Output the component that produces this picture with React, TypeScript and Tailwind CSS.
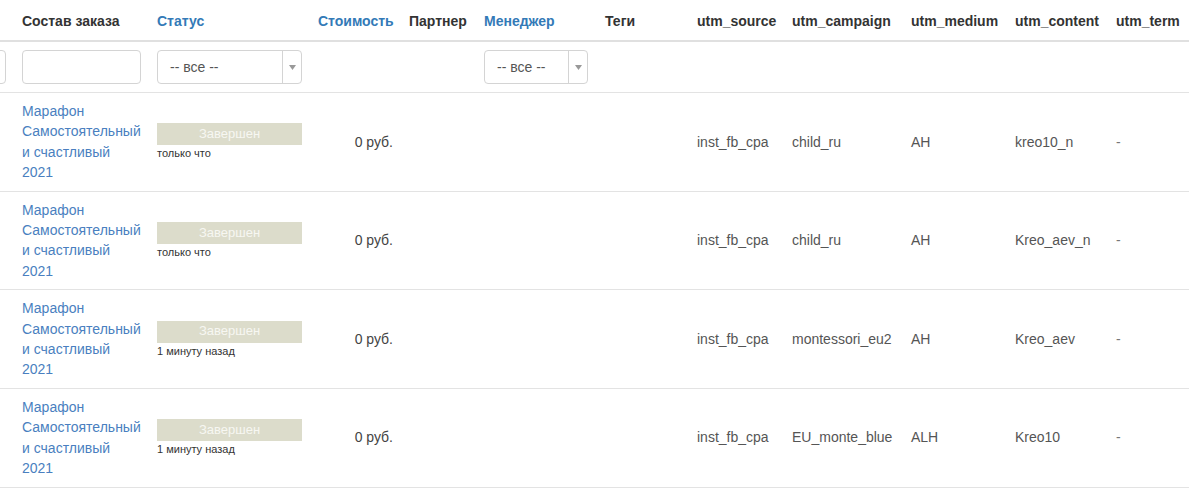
const rows = [
  { time: "только что", source: "inst_fb_cpa", campaign: "child_ru", medium: "AH", content: "kreo10_n" },
  { time: "только что", source: "inst_fb_cpa", campaign: "child_ru", medium: "AH", content: "Kreo_aev_n" },
  { time: "1 минуту назад", source: "inst_fb_cpa", campaign: "montessori_eu2", medium: "AH", content: "Kreo_aev" },
  { time: "1 минуту назад", source: "inst_fb_cpa", campaign: "EU_monte_blue", medium: "ALH", content: "Kreo10" },
  { time: "1 минуту назад", source: "inst_fb_cpa", campaign: "child_ru", medium: "AH", content: "kreo10_n" },
];

function SelectBox({ width }: { width: string }) {
  return (
    <div className={`flex h-[34px] ${width} items-stretch rounded-[4px] border border-[#d4d4d4] bg-white`}>
      <div className="flex flex-1 items-center pl-[12px] text-[14px] text-[#555]">-- все --</div>
      <div className="flex w-[19px] items-center justify-center border-l border-[#d4d4d4]">
        <svg width="7" height="5" viewBox="0 0 7 5">
          <path d="M0 0 L7 0 L3.5 5 Z" fill="#999" />
        </svg>
      </div>
    </div>
  );
}

export default function App() {
  const th = "px-[8px] pt-[11px] pb-[9px] text-left align-bottom text-[14px] leading-[20px] font-bold whitespace-nowrap";
  const td = "px-[8px] py-[8px] align-middle text-[14px] leading-[20.4px] border-t border-[#e3e3e3]";
  return (
    <div className="h-[500px] w-[1199px] overflow-hidden bg-white font-['Liberation_Sans',Arial,sans-serif] text-[#333]">
      <table className="ml-[-46px] table-fixed border-collapse" style={{ width: 1235 }}>
        <colgroup>
          <col className="w-[60px]" />
          <col className="w-[135px]" />
          <col className="w-[161px]" />
          <col className="w-[91px]" />
          <col className="w-[75px]" />
          <col className="w-[121px]" />
          <col className="w-[92px]" />
          <col className="w-[95px]" />
          <col className="w-[119px]" />
          <col className="w-[104px]" />
          <col className="w-[101px]" />
          <col className="w-[81px]" />
        </colgroup>
        <thead>
          <tr className="border-b-2 border-[#e0e0e0]">
            <th className={th}></th>
            <th className={th}>Состав заказа</th>
            <th className={`${th} text-[#337ab7]`}>Статус</th>
            <th className={`${th} text-right! text-[#337ab7]`}>Стоимость</th>
            <th className={th}>Партнер</th>
            <th className={`${th} text-[#337ab7]`}>Менеджер</th>
            <th className={th}>Теги</th>
            <th className={th}>utm_source</th>
            <th className={th}>utm_campaign</th>
            <th className={th}>utm_medium</th>
            <th className={th}>utm_content</th>
            <th className={th}>utm_term</th>
          </tr>
        </thead>
        <tbody>
          <tr>
            <td className="px-[8px] py-[8px]">
              <div className="h-[34px] w-full rounded-[4px] border border-[#d4d4d4]" />
            </td>
            <td className="px-[8px] py-[8px]">
              <div className="h-[34px] w-[119px] rounded-[4px] border border-[#d4d4d4]" />
            </td>
            <td className="px-[8px] py-[8px]">
              <SelectBox width="w-[145px]" />
            </td>
            <td />
            <td />
            <td className="px-[8px] py-[8px]">
              <SelectBox width="w-[104px]" />
            </td>
            <td />
            <td />
            <td />
            <td />
            <td />
            <td />
          </tr>
          {rows.map((r, i) => (
            <tr key={i}>
              <td className={td}></td>
              <td className={`${td} text-[#4a7fc0]`}>
                Марафон Самостоятельный и счастливый 2021
              </td>
              <td className={td}>
                <div className="flex h-[22px] w-[145px] items-center justify-center bg-[#dcdccb] text-[13px] text-[#f7f7f2]">
                  Завершен
                </div>
                <div className="mt-[1px] text-[11px] leading-[14px] text-[#333]">{r.time}</div>
              </td>
              <td className={`${td} text-right text-[#444]`}>0 руб.</td>
              <td className={td}></td>
              <td className={td}></td>
              <td className={td}></td>
              <td className={`${td} text-[#555]`}>{r.source}</td>
              <td className={`${td} text-[#555]`}>{r.campaign}</td>
              <td className={`${td} text-[#555]`}>{r.medium}</td>
              <td className={`${td} text-[#555]`}>{r.content}</td>
              <td className={`${td} text-[#777]`}>-</td>
            </tr>
          ))}
        </tbody>
      </table>
    </div>
  );
}
